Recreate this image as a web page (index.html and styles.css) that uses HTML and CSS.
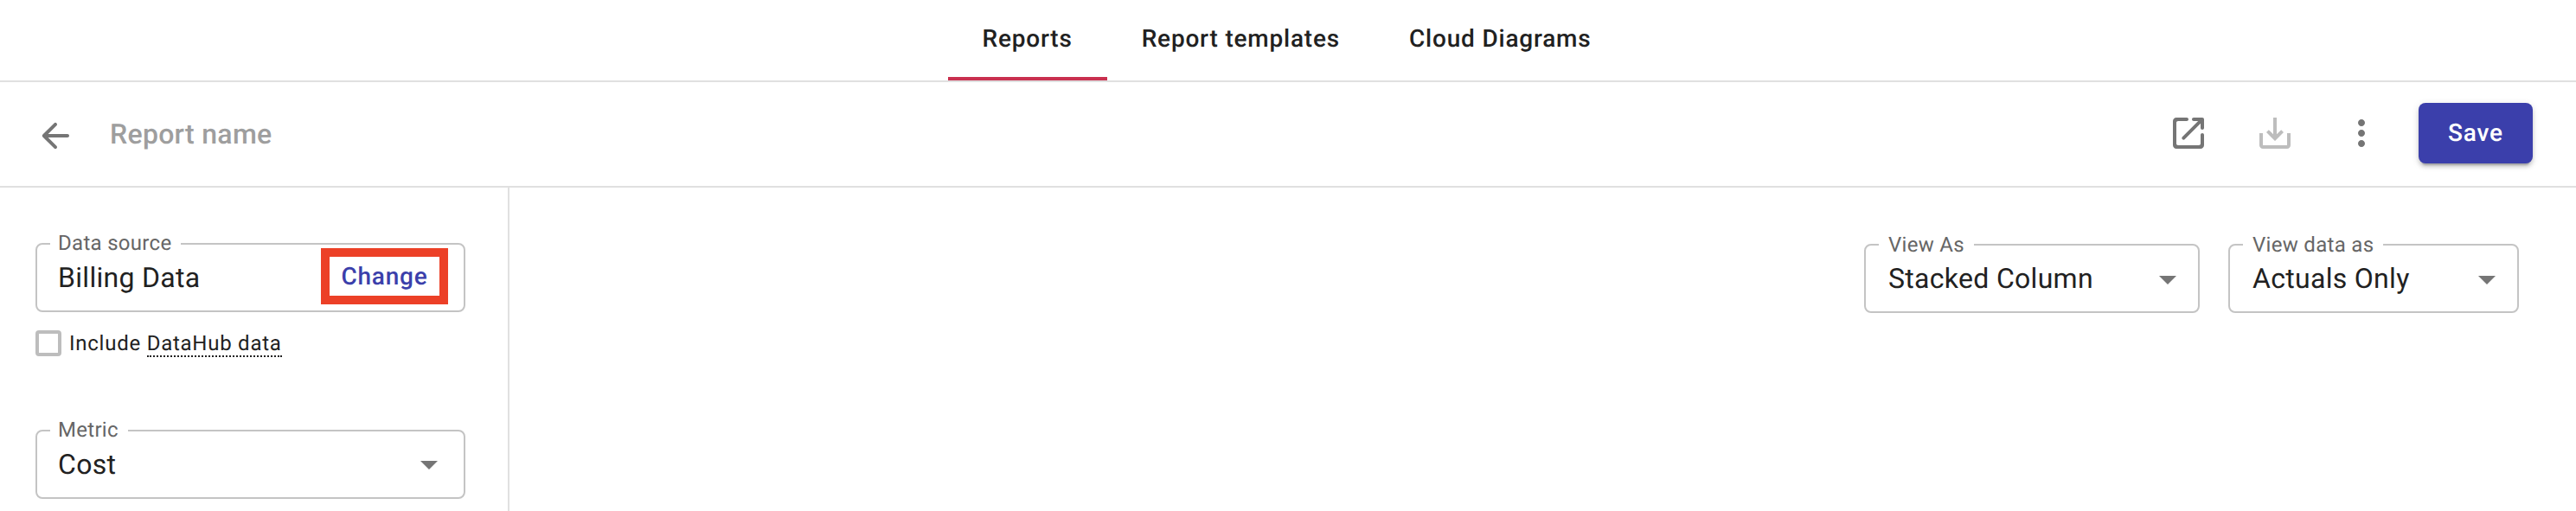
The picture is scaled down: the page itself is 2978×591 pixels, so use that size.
FILE: index.html
```html
<!DOCTYPE html>
<html lang="en">
<head>
<meta charset="utf-8">
<title>Report name</title>
<link rel="stylesheet" href="styles.css">
</head>
<body>
<nav class="tabs">
  <a class="tab tab-active">Reports</a>
  <a class="tab">Report templates</a>
  <a class="tab">Cloud Diagrams</a>
</nav>
<header class="toolbar">
  <div class="toolbar-left">
    <span class="icon-box"><svg class="icon icon-grey" viewBox="0 0 24 24"><path d="M19 11H7.83l4.88-4.88c.39-.39.39-1.03 0-1.42a.9959.9959 0 0 0-1.41 0l-6.59 6.59c-.39.39-.39 1.02 0 1.41l6.59 6.59c.39.39 1.02.39 1.41 0 .39-.39.39-1.02 0-1.41L7.83 13H19c.55 0 1-.45 1-1s-.45-1-1-1z"/></svg></span>
    <span class="report-name">Report name</span>
  </div>
  <div class="toolbar-right">
    <div class="icon-group">
      <span class="icon-box"><svg class="icon icon-grey" viewBox="0 0 24 24"><path d="M18 19H6c-.55 0-1-.45-1-1V6c0-.55.45-1 1-1h5c.55 0 1-.45 1-1s-.45-1-1-1H5c-1.11 0-2 .9-2 2v14c0 1.1.9 2 2 2h14c1.1 0 2-.9 2-2v-6c0-.55-.45-1-1-1s-1 .45-1 1v5c0 .55-.45 1-1 1zM14 4c0 .55.45 1 1 1h2.59l-9.13 9.13c-.39.39-.39 1.02 0 1.41.39.39 1.02.39 1.41 0L19 6.41V9c0 .55.45 1 1 1s1-.45 1-1V4c0-.55-.45-1-1-1h-5c-.55 0-1 .45-1 1z"/></svg></span>
      <span class="icon-box"><svg class="icon icon-disabled" viewBox="0 0 24 24"><path d="M19 12v7H5v-7H3v7c0 1.1.9 2 2 2h14c1.1 0 2-.9 2-2v-7h-2zm-6 .67 2.59-2.58L17 11.5l-5 5-5-5 1.41-1.41L11 12.67V3h2z"/></svg></span>
      <span class="icon-box"><svg class="icon icon-grey" viewBox="0 0 24 24"><path d="M12 8c1.1 0 2-.9 2-2s-.9-2-2-2-2 .9-2 2 .9 2 2 2zm0 2c-1.1 0-2 .9-2 2s.9 2 2 2 2-.9 2-2-.9-2-2-2zm0 6c-1.1 0-2 .9-2 2s.9 2 2 2 2-.9 2-2-.9-2-2-2z"/></svg></span>
    </div>
    <button class="save-button">Save</button>
  </div>
</header>
<main class="main">
  <aside class="sidebar">
    <div class="field field-source">
      <span class="field-label">Data source</span>
      <span class="field-value">Billing Data</span>
      <span class="change-box"><span class="change-link">Change</span></span>
    </div>
    <div class="check-row">
      <span class="checkbox"></span>
      <span class="check-label">Include <span class="dotted">DataHub data</span></span>
    </div>
    <div class="field field-metric">
      <span class="field-label">Metric</span>
      <span class="field-value">Cost</span>
      <span class="caret"></span>
    </div>
  </aside>
  <section class="content">
    <div class="field field-view-as">
      <span class="field-label">View As</span>
      <span class="field-value">Stacked Column</span>
      <span class="caret caret-view"></span>
    </div>
    <div class="field field-view-data">
      <span class="field-label">View data as</span>
      <span class="field-value">Actuals Only</span>
      <span class="caret caret-view"></span>
    </div>
  </section>
</main>
</body>
</html>
```
FILE: styles.css
```css
* { box-sizing: border-box; }
html, body { margin: 0; height: 591px; overflow: hidden; background: #fff; }
body { font-family: Roboto, "Liberation Sans", sans-serif; color: #212121; display: flex; flex-direction: column; text-rendering: geometricPrecision; }

.tabs { display: flex; justify-content: center; height: 95px; border-bottom: 2px solid #e0e0e0; padding-right: 3px; }
.tab { display: flex; align-items: center; height: 93px; padding: 0 40px; font-size: 28px; font-weight: 500; letter-spacing: 0.8px; color: #212121; border-bottom: 4px solid transparent; }
.tab-active { border-bottom-color: #c9304f; }

.toolbar { display: flex; justify-content: space-between; height: 122px; border-bottom: 2px solid #e0e0e0; padding: 0 50px 0 40px; }
.toolbar-left { display: flex; align-items: center; gap: 39px; height: 48px; margin-top: 38px; }
.report-name { font-size: 32px; font-weight: 500; color: #9e9e9e; line-height: 44px; margin-bottom: 4px; letter-spacing: 0.3px; }
.toolbar-right { display: flex; gap: 42px; margin-top: 24px; height: 70px; }
.icon-group { display: flex; gap: 52px; align-items: center; }
.icon-box { display: flex; width: 48px; height: 48px; }
.icon { width: 48px; height: 48px; }
.icon-grey { fill: #757575; }
.icon-disabled { fill: #bdbdbd; }
.save-button { width: 132px; height: 70px; border: 0; border-radius: 8px; background: #3b3fab; color: #fff; font: 500 28px Roboto, sans-serif; letter-spacing: 0.8px; padding: 0 0 2px; text-rendering: geometricPrecision; box-shadow: 0 6px 2px -4px rgba(0,0,0,.2), 0 4px 4px 0 rgba(0,0,0,.14), 0 2px 10px 0 rgba(0,0,0,.12); }

.main { display: flex; flex: 1; min-height: 0; }
.sidebar { width: 589px; flex: none; border-right: 2px solid #e0e0e0; padding: 64px 49px 0 41px; }
.content { flex: 1; display: flex; justify-content: flex-end; gap: 33px; padding: 65px 66px 0 0; align-items: flex-start; }

.field { position: relative; display: flex; align-items: center; height: 80px; border: 2px solid #c4c4c4; border-radius: 8px; padding-left: 26px; }
.field-label { position: absolute; left: 15px; top: -15px; padding: 0 11px; background: #fff; font-size: 24px; line-height: 28px; color: #666; letter-spacing: 0.3px; }
.field-value { font-size: 32px; line-height: 40px; color: #212121; letter-spacing: 0.3px; }
.caret { position: absolute; right: 30px; top: 34px; width: 0; height: 0; border-left: 10px solid transparent; border-right: 10px solid transparent; border-top: 10px solid #757575; }
.caret-view { right: 25px; top: 35px; }

.sidebar .field { padding-left: 24px; }
.sidebar .field-label { top: -16px; padding-left: 9px; }

.field-source { justify-content: space-between; padding-right: 18px; }
.change-box { display: flex; align-items: center; justify-content: center; width: 147px; height: 65px; margin-bottom: 3px; border: 10px solid #ec4027; }
.change-link { font-size: 28px; font-weight: 500; color: #3b3fab; letter-spacing: 0.8px; }

.check-row { display: flex; align-items: center; gap: 9px; margin-top: 21px; height: 30px; }
.checkbox { width: 30px; height: 30px; border: 4px solid #bdbdbd; border-radius: 4px; }
.check-label { font-size: 24px; line-height: 30px; color: #212121; letter-spacing: 0.75px; }
.dotted { border-bottom: 2px dotted #212121; }

.field-metric { margin-top: 85px; }
.field-view-as { width: 388px; }
.field-view-data { width: 336px; }
```
